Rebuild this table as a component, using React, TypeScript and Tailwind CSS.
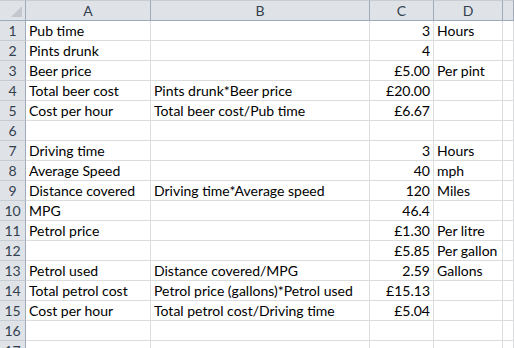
import React from "react";

type Row = { n: number; a?: string; b?: string; c?: string; d?: string };

const rows: Row[] = [
  { n: 1, a: "Pub time", c: "3", d: "Hours" },
  { n: 2, a: "Pints drunk", c: "4" },
  { n: 3, a: "Beer price", c: "£5.00", d: "Per pint" },
  { n: 4, a: "Total beer cost", b: "Pints drunk*Beer price", c: "£20.00" },
  { n: 5, a: "Cost per hour", b: "Total beer cost/Pub time", c: "£6.67" },
  { n: 6 },
  { n: 7, a: "Driving time", c: "3", d: "Hours" },
  { n: 8, a: "Average Speed", c: "40", d: "mph" },
  { n: 9, a: "Distance covered", b: "Driving time*Average speed", c: "120", d: "Miles" },
  { n: 10, a: "MPG", c: "46.4" },
  { n: 11, a: "Petrol price", c: "£1.30", d: "Per litre" },
  { n: 12, c: "£5.85", d: "Per gallon" },
  { n: 13, a: "Petrol used", b: "Distance covered/MPG", c: "2.59", d: "Gallons" },
  { n: 14, a: "Total petrol cost", b: "Petrol price (gallons)*Petrol used", c: "£15.13" },
  { n: 15, a: "Cost per hour", b: "Total petrol cost/Driving time", c: "£5.04" },
  { n: 16 },
  { n: 17 },
];

const cell = "h-[20px] border-r border-b border-[#dadcdd] whitespace-nowrap overflow-hidden leading-[19px] text-[14px] text-black";

export default function App() {
  return (
    <div
      className="w-[514px] h-[348px] overflow-hidden bg-white"
      style={{ fontFamily: "Lato, 'Open Sans', sans-serif" }}
    >
      <div className="grid grid-cols-[26px_125px_219px_64px_69px_1fr]">
        <div className="relative h-[21px] bg-[#dfe3e8] border-r border-b border-[#9eaab8] border-t border-t-[#c9ccd1]">
          <svg className="absolute right-[3px] bottom-[3px]" width="11" height="11" viewBox="0 0 11 11">
            <polygon points="11,0 11,11 0,11" fill="#c4c8ce" />
          </svg>
        </div>
        {["A", "B", "C", "D", ""].map((h, i) => (
          <div
            key={i}
            className="h-[21px] bg-[#dfe3e8] border-r border-b border-[#9eaab8] border-t border-t-[#c9ccd1] flex items-center justify-center text-[14px] text-[#34404e]"
          >
            {h}
          </div>
        ))}
        {rows.map((r) => (
          <React.Fragment key={r.n}>
            <div className="h-[20px] bg-[#dfe3e8] border-r border-r-[#9eaab8] border-b border-b-[#c6ccd4] flex items-center justify-center text-[14px] text-[#34404e] leading-[19px]">
              {r.n}
            </div>
            <div className={`${cell} pl-[3px]`}>{r.a ?? ""}</div>
            <div className={`${cell} pl-[3px]`}>{r.b ?? ""}</div>
            <div className={`${cell} pr-[3px] text-right`}>{r.c ?? ""}</div>
            <div className={`${cell} pl-[3px]`}>{r.d ?? ""}</div>
            <div className={cell}></div>
          </React.Fragment>
        ))}
      </div>
    </div>
  );
}
